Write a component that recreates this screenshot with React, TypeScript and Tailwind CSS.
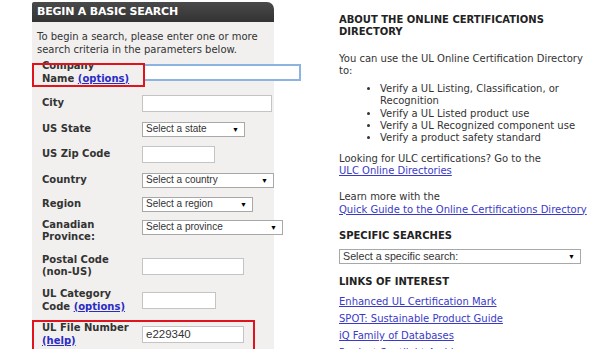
import React from 'react';

const font = "font-['DejaVu_Sans',Verdana,sans-serif]";

const TextBox: React.FC<{ w: number; value?: string; focus?: boolean }> = ({ w, value, focus }) => (
  <div
    style={{ width: w }}
    className={`h-[17px] bg-white flex items-center px-[3px] text-[11.5px] text-[#333] font-['Liberation_Sans',Arial,sans-serif] ${
      focus ? 'border-2 border-[#8cb4e0]' : 'border border-[#c4c4c4]'
    }`}
  >
    {value}
  </div>
);

const Select: React.FC<{ w: number; label: string; big?: boolean }> = ({ w, label, big }) => (
  <div
    style={{ width: w }}
    className={`h-[15px] bg-white border border-[#a8a8a8] flex items-center justify-between pl-[3px] pr-[5px] leading-none text-[#333] font-['Liberation_Sans',Arial,sans-serif] ${
      big ? 'text-[10.7px]' : 'text-[10px]'
    }`}
  >
    <span>{label}</span>
    <span className="text-[7px] text-black">▼</span>
  </div>
);

const Row: React.FC<{ h: number; label: React.ReactNode; children: React.ReactNode; marked?: { top: number; h: number; w: number } }> = ({
  h,
  label,
  children,
  marked,
}) => (
  <div style={{ height: h }} className="relative flex items-center">
    <div className="w-[110px] shrink-0 pl-[10px] font-bold text-[#333] leading-[12.5px]">{label}</div>
    {children}
    {marked && (
      <div
        style={{ top: marked.top, height: marked.h, width: marked.w }}
        className="absolute left-0 border-2 border-[#e0141e] pointer-events-none"
      />
    )}
  </div>
);

const Opt: React.FC<{ children: React.ReactNode }> = ({ children }) => (
  <span className="text-[#2a2ac4] underline">{children}</span>
);

const Link: React.FC<{ children: React.ReactNode }> = ({ children }) => (
  <div className="text-[#3a3ac8] underline">{children}</div>
);

export default function App() {
  return (
    <div className={`w-[600px] h-[349px] overflow-hidden bg-white flex text-[10px] leading-[12.5px] text-[#333] ${font}`}>
      {/* Search panel */}
      <div className="ml-[32px] mt-[2px] w-[242px] shrink-0 flex flex-col">
        <div className="h-[20px] shrink-0 bg-gradient-to-b from-[#4a4a4a] to-[#333] rounded-tl-[2px] rounded-tr-[7px] flex items-center pl-[5px] text-white text-[11px] font-bold tracking-[-0.2px]">
          BEGIN A BASIC SEARCH
        </div>
        <div className="flex-1 bg-[#f1f0ef]">
          <p className="pl-[5px] pr-[4px] pt-[9px] h-[36px]">
            To begin a search, please enter one or more search criteria in the parameters below.
          </p>
          <Row h={29} label={<>Company<br />Name <Opt>(options)</Opt></>} marked={{ top: 5, h: 24, w: 113 }}>
            <div className="mt-[-1px] ml-[1px]">
              <TextBox w={158} focus />
            </div>
          </Row>
          <Row h={32} label="City">
            <TextBox w={130} />
          </Row>
          <Row h={20} label="US State">
            <Select w={103} label="Select a state" />
          </Row>
          <Row h={31} label="US Zip Code">
            <TextBox w={73} />
          </Row>
          <Row h={20} label="Country">
            <Select w={169} label="Select a country" />
          </Row>
          <Row h={28} label="Region">
            <Select w={111} label="Select a region" />
          </Row>
          <Row h={30} label={<div className="-mt-[4px]">Canadian<br />Province:</div>}>
            <div className="-mt-[12px]">
              <Select w={141} label="Select a province" />
            </div>
          </Row>
          <Row h={36} label={<>Postal Code<br />(non-US)</>}>
            <TextBox w={102} />
          </Row>
          <Row h={33} label={<>UL Category<br />Code <Opt>(options)</Opt></>}>
            <TextBox w={74} />
          </Row>
          <Row h={35} label={<>UL File Number<br /><Opt>(help)</Opt></>} marked={{ top: 3, h: 40, w: 223 }}>
            <TextBox w={102} value="e229340" />
          </Row>
        </div>
      </div>

      {/* About column */}
      <div className="ml-[65px] mt-[14px] w-[250px] shrink-0 leading-[12.3px]">
        <h2 className="font-bold text-[#222]">
          ABOUT THE ONLINE CERTIFICATIONS
          <br />
          DIRECTORY
        </h2>
        <p className="mt-[14px]">You can use the UL Online Certification Directory to:</p>
        <ul className="mt-[6px] pl-[41px] pr-[5px] list-disc">
          <li>Verify a UL Listing, Classification, or Recognition</li>
          <li>Verify a UL Listed product use</li>
          <li>Verify a UL Recognized component use</li>
          <li>Verify a product safety standard</li>
        </ul>
        <p className="mt-[8px]">Looking for ULC certifications? Go to the</p>
        <Link>ULC Online Directories</Link>
        <p className="mt-[14px]">Learn more with the</p>
        <Link>Quick Guide to the Online Certifications Directory</Link>
        <h2 className="mt-[14px] font-bold text-[#222]">SPECIFIC SEARCHES</h2>
        <div className="mt-[7px]">
          <Select w={242} label="Select a specific search:" big />
        </div>
        <h2 className="mt-[12px] font-bold text-[#222]">LINKS OF INTEREST</h2>
        <div className="mt-[8px] flex flex-col gap-[4.5px]">
          <Link>Enhanced UL Certification Mark</Link>
          <Link>SPOT: Sustainable Product Guide</Link>
          <Link>iQ Family of Databases</Link>
          <Link>Product Spotlight Archives</Link>
        </div>
      </div>
    </div>
  );
}
